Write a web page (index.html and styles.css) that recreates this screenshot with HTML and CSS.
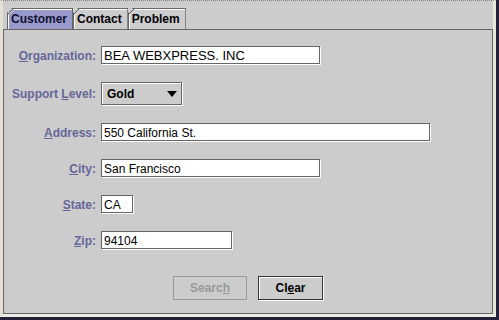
FILE: index.html
```html
<!DOCTYPE html>
<html lang="en">
    <head>
        <meta charset="utf-8">
        <title>Customer</title>
        <link rel="stylesheet" href="styles.css">
    </head>
    <body>
    <div class="frame">
        <div class="inner">
            <div class="tabs">
                <span class="tab selected">Customer</span>
                <span class="tab">Contact</span>
                <span class="tab">Problem</span>
            </div>
            <div class="panel">
                <div class="form">
                    <label class="lbl"><u>O</u>rganization:</label>
                    <div class="field w-org big">BEA WEBXPRESS. INC</div>

                    <label class="lbl">Support <u>L</u>evel:</label>
                    <div class="combo"><span>Gold</span><i class="arrow"></i></div>

                    <label class="lbl"><u>A</u>ddress:</label>
                    <div class="field w-addr">550 California St.</div>

                    <label class="lbl"><u>C</u>ity:</label>
                    <div class="field w-org">San Francisco</div>

                    <label class="lbl"><u>S</u>tate:</label>
                    <div class="field w-state">CA</div>

                    <label class="lbl"><u>Z</u>ip:</label>
                    <div class="field w-zip">94104</div>
                </div>
                <div class="buttons">
                    <span class="btn disabled">Searc<u>h</u></span>
                    <span class="btn clear">Cl<u>e</u>ar</span>
                </div>
            </div>
        </div>
    </div>
    </body>
</html>
```

FILE: styles.css
```css
body{margin:0;font-family:"Liberation Sans",Arial,sans-serif;font-size:12px;}
.frame{
    width:499px;
    height:320px;
    box-sizing:border-box;
    border-right:3px solid #23213a;
    border-bottom:3px solid #23213a;
    background:#cccccc;
}
.inner{
    height:317px;
    box-sizing:border-box;
    border-left:3px solid #e4e0d4;
    border-right:3px solid #e8e5da;
    border-bottom:3px solid #eeece4;
    border-top:1px dotted #808080;
    display:flex;
    flex-direction:column;
}
.tabs{display:flex;margin:7px 0 0 4px;height:21px;}
.tab{
    position:relative;
    height:21px;
    line-height:21px;
    box-sizing:border-box;
    padding:0 5px 0 3px;
    border:1px solid #666;
    border-bottom:0;
    font-weight:bold;
    color:#000;
    background:#cccccc;
    box-shadow:inset 1px 1px 0 #fff;
    clip-path:polygon(0 5px,5px 0,100% 0,100% 100%,0 100%);
}
.tab::before{
    content:"";
    position:absolute;
    left:-1px;top:-1px;
    width:7px;height:7px;
    background:linear-gradient(to bottom right,transparent calc(50% - 1px),#666 50%,#fff calc(50% + 1px),transparent calc(50% + 1.5px));
}
.tab.selected{background:#9999cc;color:#111133;}
.panel{
    flex:1;
    border:1px solid #666;
}
.form{
    display:grid;
    grid-template-columns:91px auto;
    grid-template-rows:20px 25px 20px 20px 20px 20px;
    column-gap:5px;
    row-gap:16px;
    padding:16px 0 0 1px;
    justify-items:start;
}
.lbl{
    justify-self:end;
    align-self:center;
    font-weight:bold;
    color:#666699;
    margin-top:-1px;
}
.field{
    height:18px;
    line-height:18px;
    box-sizing:border-box;
    border:1px solid #666;
    background:#fff;
    box-shadow:1px 1px 0 #fff;
    padding-left:2px;
    color:#000;
    white-space:nowrap;
    overflow:hidden;
}
.big{font-size:13px;}
.w-org{width:219px;}
.w-addr{width:329px;}
.w-state{width:32px;}
.w-zip{width:131px;}
.combo{
    width:81px;
    height:23px;
    box-sizing:border-box;
    border:1px solid #666;
    box-shadow:1px 1px 0 #fff,inset 1px 1px 0 #fff;
    display:flex;
    align-items:center;
    justify-content:space-between;
    padding:0 4px 0 5px;
    font-weight:bold;
}
.arrow{
    width:0;height:0;
    border-left:5px solid transparent;
    border-right:5px solid transparent;
    border-top:6px solid #000;
}
.buttons{display:flex;justify-content:center;gap:11px;margin-top:25px;}
.btn{
    height:24px;
    line-height:22px;
    box-sizing:border-box;
    border:1px solid #333;
    box-shadow:1px 1px 0 #fff,inset 1px 1px 0 #fff;
    text-align:center;
    font-weight:bold;
}
.btn.disabled{width:74px;color:#999;border-color:#999;box-shadow:none;}
.btn.clear{width:65px;color:#000;}
```
